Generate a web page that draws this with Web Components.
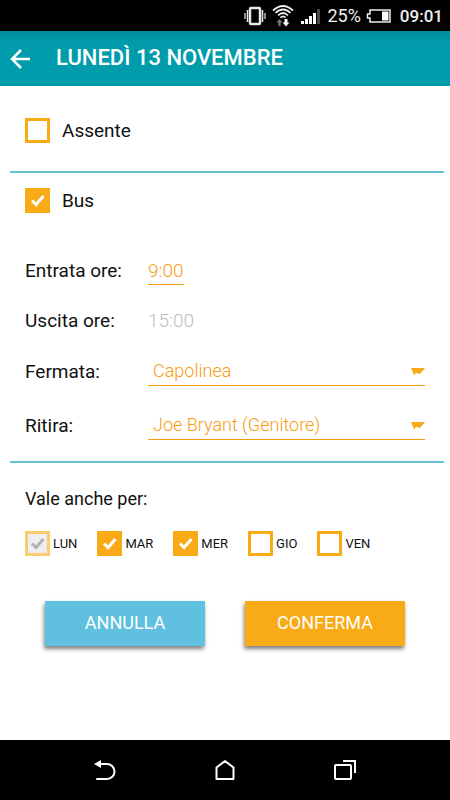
<!DOCTYPE html>
<html lang="it">
<head>
<meta charset="utf-8">
<meta name="viewport" content="width=device-width, initial-scale=1">
<title>Lunedì 13 novembre</title>
<style>
  html, body {
    height: 100%;
    margin: 0;
  }
  body {
    background: #fff;
    color: #111;
    font-family: Roboto, "Liberation Sans", sans-serif;
    font-size: 18px;
    --teal: #009cab;
    --line: #62c0d0;
    --blue: #5fc1df;
    --orange: #f9aa17;
    --orange-dark: #f79c10;
    --label-size: 19px;
  }
</style>
</head>
<body>

<template id="t-status">
  <style>
    :host {
      display: flex;
      align-items: center;
      justify-content: flex-end;
      height: 31px;
      padding: 0 7px;
      box-sizing: border-box;
      background: #000;
      color: #f2f2f2;
      font-size: 18px;
    }
    svg {
      display: block;
      margin-right: 6px;
    }
    .battery { margin: 0 9px 0 5px; }
    .clock {
      font-size: 17px;
      font-weight: 500;
    }
  </style>
  <svg width="22" height="20" viewBox="0 0 22 20" fill="none" stroke="#e8e8e8">
    <rect x="6" y="2" width="10" height="16" rx="1" stroke-width="2.500"/>
    <path d="M3.500 4v12M18.500 4v12" stroke-width="1.500"/>
    <path d="M1 7v6M21 7v6" stroke-width="1.200"/>
  </svg>
  <svg width="22" height="22" viewBox="0 0 22 22" fill="none">
    <path d="M1 5.500Q11-3.500 21 5.500M3.500 8Q11 1 18.500 8M6 10.500Q11 5.500 16 10.500M8.500 12.700Q11 10.200 13.500 12.700" stroke="#eee" stroke-width="1.700"/>
    <path d="M7.500 14l3 3.500H8.700V21H6.300v-3.500H4.500z" fill="#777"/>
    <path d="M14 21.500l3.500-4h-2V14h-3v3.500h-2z" fill="#fff"/>
  </svg>
  <svg width="21" height="18" viewBox="0 0 21 18">
    <path d="M1 14h3v3H1zM5 12h3v5H5zM9 9h3v8H9zM13 6h3v11h-3z" fill="#fff"/>
    <path d="M17 2h3v15h-3z" fill="#4a4a4a"/>
  </svg>
  <span>25%</span>
  <svg class="battery" width="25" height="14" viewBox="0 0 25 14">
    <path d="M4 1h20v12H4V9H1.500V5H4z" fill="none" stroke="#eee" stroke-width="1.500"/>
    <path d="M16 2.500h6.500v9H16z" fill="#fff"/>
  </svg>
  <span class="clock">09:01</span>
</template>

<template id="t-header">
  <style>
    :host {
      display: flex;
      align-items: center;
      height: 55px;
      padding: 0 10px;
      gap: 26px;
      background: linear-gradient(#028b99, var(--teal) 12px);
      color: #fff;
    }
    button {
      padding: 0;
      border: 0;
      background: none;
      color: inherit;
      cursor: pointer;
    }
    svg { display: block; }
    h1 {
      margin: 0;
      font-size: 22px;
      font-weight: 500;
      line-height: 24px;
      padding-bottom: 2px;
    }
  </style>
  <button type="button" aria-label="Indietro">
    <svg width="20" height="20" viewBox="0 0 20 20" fill="none" stroke="currentColor" stroke-width="2.500">
      <path d="M11 1L2 10l9 9M2 10h18"/>
    </svg>
  </button>
  <h1><slot></slot></h1>
</template>

<template id="t-check">
  <style>
    :host { display: block; }
    label {
      display: flex;
      align-items: center;
      gap: var(--check-gap, 12px);
      font-size: var(--check-size, var(--label-size));
      line-height: 24px;
      cursor: pointer;
    }
    input {
      appearance: none;
      flex: none;
      width: 25px;
      height: 25px;
      margin: 0;
      box-sizing: border-box;
      border: 3px solid var(--orange);
      background: #fff;
    }
    .box {
      display: grid;
    }
    .box > * { grid-area: 1 / 1; }
    svg {
      display: none;
      place-self: center;
      pointer-events: none;
      color: #fff;
    }
    input:checked { background: var(--orange); }
    input:checked + svg { display: block; }
    input:disabled {
      border-color: #fccb6e;
      background: #eee;
    }
    input:disabled + svg { color: #b3b3b3; }
  </style>
  <label>
    <span class="box">
      <input type="checkbox">
      <svg width="15" height="13" viewBox="0 0 15 13" fill="none" stroke="currentColor" stroke-width="3">
        <path d="M2 6.500l4 4L13.500 2"/>
      </svg>
    </span>
    <span><slot></slot></span>
  </label>
</template>

<template id="t-time">
  <style>
    :host {
      display: grid;
      grid-template-columns: 123px 1fr;
      align-items: center;
      height: 30px;
      font-size: var(--label-size);
    }
    input {
      justify-self: start;
      field-sizing: content;
      height: 30px;
      padding: 0;
      box-sizing: border-box;
      border: solid var(--orange-dark);
      border-width: 1px 0;
      border-top-color: transparent;
      background: none;
      color: var(--orange-dark);
      font: inherit;
      font-weight: 300;
      outline: none;
    }
    input:disabled {
      border-color: transparent;
      color: #bdbdbd;
    }
  </style>
  <label for="time"></label>
  <input id="time" type="text">
</template>

<template id="t-select">
  <style>
    :host {
      display: grid;
      grid-template-columns: 123px 1fr;
      align-items: center;
      height: 30px;
    }
    label { font-size: var(--label-size); }
    .field {
      display: grid;
      align-items: center;
      border-bottom: 1px solid var(--orange-dark);
    }
    .field > * { grid-area: 1 / 1; }
    select {
      appearance: none;
      width: 100%;
      height: 29px;
      padding: 0 20px 0 5px;
      border: 0;
      background: none;
      color: var(--orange-dark);
      font: inherit;
      font-weight: 300;
      outline: none;
    }
    svg {
      justify-self: end;
      pointer-events: none;
      fill: var(--orange);
    }
  </style>
  <label for="choice"></label>
  <div class="field">
    <select id="choice"></select>
    <svg width="14" height="8" viewBox="0 0 14 8"><path d="M0 1h14L8.800 7H7.500L7 5.500 5.500 6.500 4.800 5.500 4 8H3z"/></svg>
  </div>
</template>

<template id="t-button">
  <style>
    :host {
      display: block;
      flex: 1;
    }
    button {
      width: 100%;
      height: 45px;
      padding: 0 0 2px;
      border: 0;
      background: var(--button-color, var(--blue));
      box-shadow: -1px 3px 4px rgba(0, 0, 0, .5);
      color: #fff;
      font: inherit;
      cursor: pointer;
    }
  </style>
  <button type="button"><slot></slot></button>
</template>

<template id="t-nav">
  <style>
    :host {
      display: flex;
      align-items: center;
      justify-content: center;
      gap: 96px;
      height: 60px;
      background: #000;
    }
    button {
      padding: 0;
      border: 0;
      background: none;
      color: #fff;
      cursor: pointer;
    }
    svg {
      display: block;
      fill: none;
      stroke: currentColor;
      stroke-width: 2;
    }
  </style>
  <button type="button" aria-label="Indietro">
    <svg width="24" height="22" viewBox="0 0 24 22">
      <path d="M6 5h8a7 7 0 0 1 0 15H4" stroke-linecap="round"/>
      <path d="M1 5l7-4v8z" fill="currentColor" stroke="none"/>
    </svg>
  </button>
  <button type="button" aria-label="Home">
    <svg width="24" height="22" viewBox="0 0 24 22">
      <path d="M3.500 8.500L12 2l8.500 6.500V20h-17z" stroke-linejoin="round"/>
    </svg>
  </button>
  <button type="button" aria-label="App recenti">
    <svg width="24" height="22" viewBox="0 0 24 22">
      <rect x="2" y="6" width="16" height="14" rx="1"/>
      <path d="M10 2h12v12"/>
    </svg>
  </button>
</template>

<template id="t-page">
  <style>
    :host {
      display: flex;
      flex-direction: column;
      min-height: 100%;
    }
    main { flex: 1; }
    section {
      margin: 0 6px 0 10px;
      padding: 0 19px 0 15px;
    }
    section + section { border-top: 2px solid var(--line); }
    .absent { padding-top: 32px; padding-bottom: 28px; }
    .bus { padding-top: 15px; padding-bottom: 21px; }
    .times {
      display: grid;
      gap: 20px;
      margin: 42px 0 21px;
    }
    .choices {
      display: grid;
      gap: 24px;
    }
    .repeat { padding-top: 25px; }
    p {
      margin: 0;
      line-height: 22px;
    }
    .days {
      display: flex;
      flex-wrap: wrap;
      gap: 10px 20px;
      margin-top: 21px;
      --check-gap: 3px;
      --check-size: 13px;
    }
    .actions {
      display: flex;
      gap: 40px;
      padding: 45px 45px 20px;
    }
    .confirm { --button-color: var(--orange); }
  </style>
  <status-bar></status-bar>
  <page-header>LUNEDÌ 13 NOVEMBRE</page-header>
  <main>
    <section class="absent">
      <check-item>Assente</check-item>
    </section>
    <section class="bus">
      <check-item checked>Bus</check-item>
      <div class="times">
        <time-field label="Entrata ore:" value="9:00"></time-field>
        <time-field label="Uscita ore:" value="15:00" disabled></time-field>
      </div>
      <div class="choices">
        <select-field label="Fermata:" value="Capolinea"></select-field>
        <select-field label="Ritira:" value="Joe Bryant (Genitore)"></select-field>
      </div>
    </section>
    <section class="repeat">
      <p>Vale anche per:</p>
      <div class="days">
        <check-item checked disabled>LUN</check-item>
        <check-item checked>MAR</check-item>
        <check-item checked>MER</check-item>
        <check-item>GIO</check-item>
        <check-item>VEN</check-item>
      </div>
    </section>
    <div class="actions">
      <action-button>ANNULLA</action-button>
      <action-button class="confirm">CONFERMA</action-button>
    </div>
  </main>
  <nav-bar></nav-bar>
</template>

<day-page></day-page>

<script>
  (function () {
    class BaseElement extends HTMLElement {
      constructor() {
        super()
        const template = document.querySelector(this.constructor.template)
        const shadowRoot = this.attachShadow({ mode: 'open' })
        shadowRoot.appendChild(template.content.cloneNode(true))
      }
      $(selector) {
        return this.shadowRoot.querySelector(selector)
      }
    }

    class StatusBar extends BaseElement {
      static template = '#t-status'
    }

    class PageHeader extends BaseElement {
      static template = '#t-header'
    }

    class CheckItem extends BaseElement {
      static template = '#t-check'
      connectedCallback() {
        const input = this.$('input')
        input.checked = this.hasAttribute('checked')
        input.disabled = this.hasAttribute('disabled')
      }
    }

    class TimeField extends BaseElement {
      static template = '#t-time'
      connectedCallback() {
        const input = this.$('input')
        this.$('label').textContent = this.getAttribute('label')
        input.value = this.getAttribute('value')
        input.disabled = this.hasAttribute('disabled')
      }
    }

    class SelectField extends BaseElement {
      static template = '#t-select'
      connectedCallback() {
        this.$('label').textContent = this.getAttribute('label')
        this.$('select').replaceChildren(new Option(this.getAttribute('value')))
      }
    }

    class ActionButton extends BaseElement {
      static template = '#t-button'
    }

    class NavBar extends BaseElement {
      static template = '#t-nav'
    }

    class DayPage extends BaseElement {
      static template = '#t-page'
    }

    customElements.define('status-bar', StatusBar)
    customElements.define('page-header', PageHeader)
    customElements.define('check-item', CheckItem)
    customElements.define('time-field', TimeField)
    customElements.define('select-field', SelectField)
    customElements.define('action-button', ActionButton)
    customElements.define('nav-bar', NavBar)
    customElements.define('day-page', DayPage)
  })()
</script>
</body>
</html>
